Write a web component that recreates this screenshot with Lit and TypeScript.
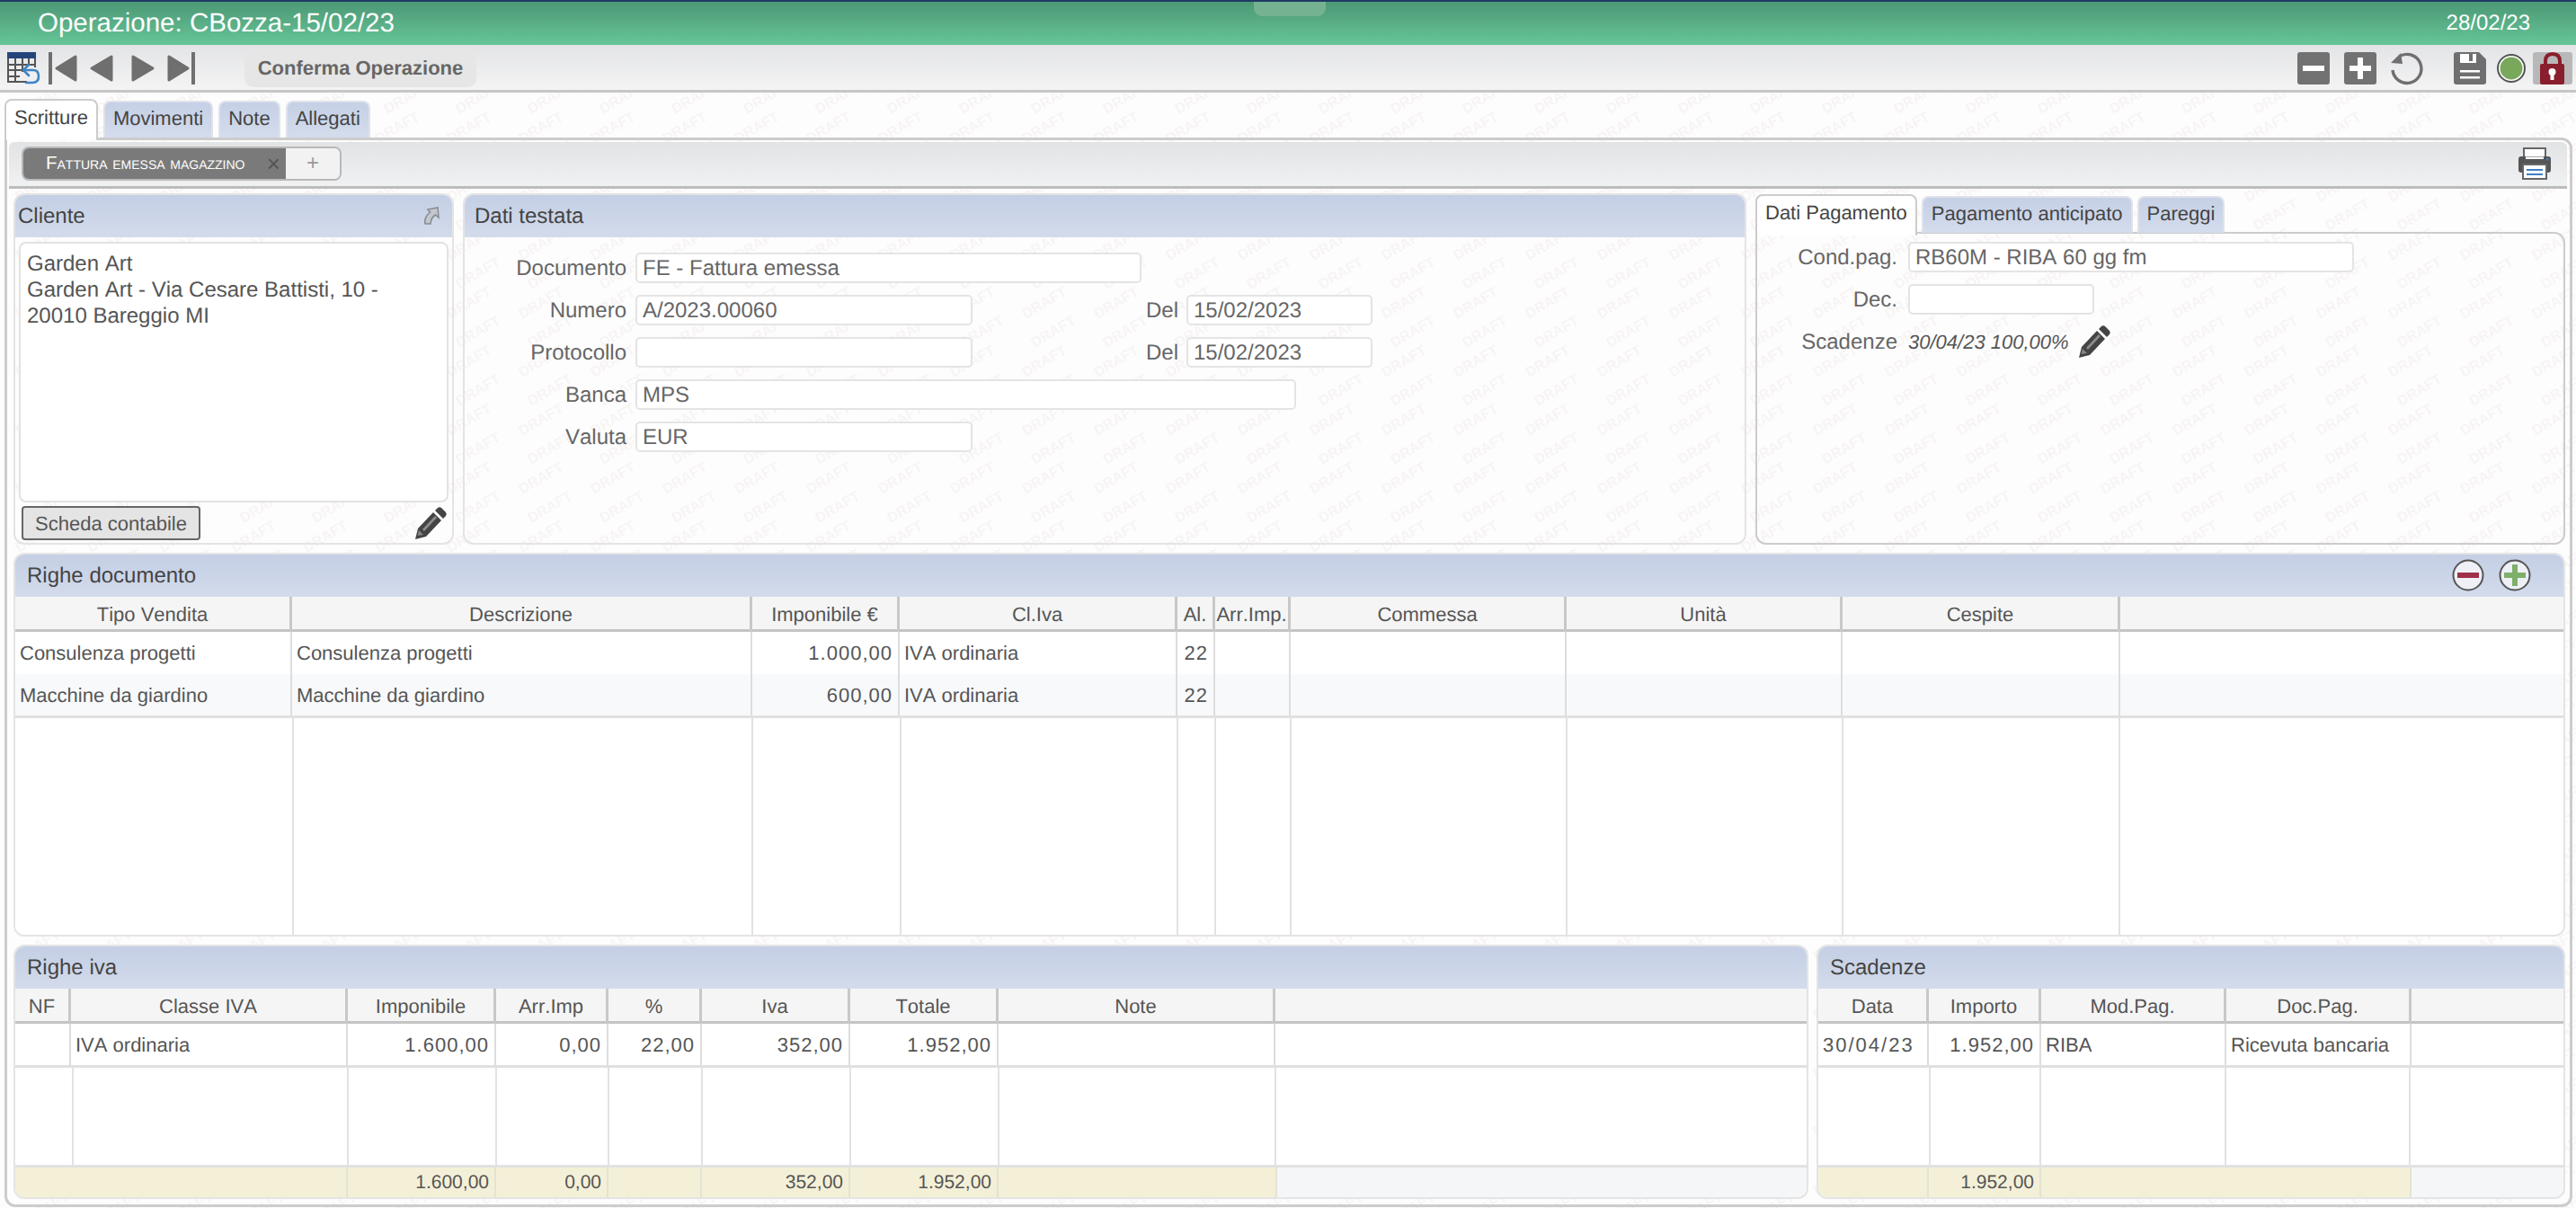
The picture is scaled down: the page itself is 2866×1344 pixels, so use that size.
import { LitElement, html, svg, css, unsafeCSS } from 'lit';
import { customElement } from 'lit/decorators.js';

// DRAFT watermark tile, the texts are repeated so they wrap over the tile edges
const marks: string[] = [];
for (const [cx, cy] of [[42, 12], [52, 44]]) {
  for (const dx of [-80, 0, 80]) {
    for (const dy of [-65, 0, 65]) {
      const x = cx + dx;
      const y = cy + dy;
      marks.push(`<text x='${x}' y='${y + 5}' transform='rotate(-30 ${x} ${y})' text-anchor='middle' font-family='Liberation Sans' font-weight='700' font-size='16' fill='%23f8f4f4'>DRAFT</text>`);
    }
  }
}
const blur = `<filter id='b' x='0' y='0' width='100%' height='100%'><feGaussianBlur stdDeviation='0.5'/></filter>`;
const watermark = `url("data:image/svg+xml,<svg xmlns='http://www.w3.org/2000/svg' width='80' height='65'>${blur}<g filter='url(%23b)'>${marks.join('')}</g></svg>")`;

interface Col { title: string; width: string; }
type Align = 'l' | 'r' | 'd' | '';
interface Cell { text?: string; align?: Align; }

const pencil = (cls: string) => html`<svg class=${cls} viewBox="0 0 36 36">
  <path fill="#444" d="M1 36 L4 24 L21 6 L30 15 L13 33 Z"/>
  <path fill="#8c8c8c" d="M9 25 L23 10 L25 12 L11 27 Z"/>
  <path fill="#fff" d="M3.5 32 L5 26 L10 31 Z" opacity=".35"/>
  <path fill="#444" d="M23 4 L26 1 Q28 -0.5 30 1 L35 6 Q36.5 8 35 10 L32 13 Z"/>
</svg>`;

const round = (kind: 'minus' | 'plus') => html`<svg class="round" viewBox="0 0 36 36">
  <circle cx="18" cy="18" r="16.5" fill="#eef0f6" stroke="#555" stroke-width="2"/>
  ${kind === 'minus'
    ? svg`<rect x="6" y="15" width="24" height="6" fill="#a0304a"/>`
    : svg`<path fill="#7fb069" d="M15 6 H21 V15 H30 V21 H21 V30 H15 V21 H6 V15 H15 Z"/>`}
</svg>`;

@customElement('app-root')
export class AppRoot extends LitElement {
  renderTable(cols: Col[], rows: Cell[][], fillCols: string, totals?: { cols: string; cells: Cell[]; }) {
    const tpl = cols.map((c) => c.width).join(' ');
    return html`
      <div class="thead" style="grid-template-columns:${tpl}">
        ${cols.map((c) => html`<div class="th">${c.title}</div>`)}
      </div>
      ${rows.map((r, i) => html`
        <div class="tr ${i % 2 ? 'odd' : ''} ${i === rows.length - 1 ? 'end' : ''}" style="grid-template-columns:${tpl}">
          ${r.map((c) => html`<div class="td ${c.align === 'r' ? 'right' : ''} ${c.align === 'd' ? 'dt' : ''}">${c.text ?? ''}</div>`)}
        </div>
      `)}
      <div class="filler" style="grid-template-columns:${fillCols}">
        ${fillCols.split(' ').map(() => html`<div class="fc"></div>`)}
      </div>
      ${totals ? html`
        <div class="totals" style="grid-template-columns:${totals.cols}">
          ${totals.cells.map((c) => html`<div class="tot ${c.text === undefined && c.align === '' ? 'plain' : ''}">${c.text ?? ''}</div>`)}
        </div>
      ` : ''}
    `;
  }

  render() {
    const docCols: Col[] = [
      { title: 'Tipo Vendita', width: '308px' }, { title: 'Descrizione', width: '512px' },
      { title: 'Imponibile €', width: '164px' }, { title: 'Cl.Iva', width: '309px' },
      { title: 'Al.', width: '42px' }, { title: 'Arr.Imp.', width: '84px' },
      { title: 'Commessa', width: '307px' }, { title: 'Unità', width: '307px' },
      { title: 'Cespite', width: '309px' }, { title: '', width: '1fr' },
    ];
    const docRow = (a: string, imp: string): Cell[] => [
      { text: a }, { text: a }, { text: imp, align: 'r' }, { text: 'IVA ordinaria' },
      { text: '22', align: 'r' }, {}, {}, {}, {}, {},
    ];
    const ivaCols: Col[] = [
      { title: 'NF', width: '62px' }, { title: 'Classe IVA', width: '308px' },
      { title: 'Imponibile', width: '165px' }, { title: 'Arr.Imp', width: '125px' },
      { title: '%', width: '104px' }, { title: 'Iva', width: '165px' },
      { title: 'Totale', width: '165px' }, { title: 'Note', width: '308px' }, { title: '', width: '1fr' },
    ];
    const scadCols: Col[] = [
      { title: 'Data', width: '123px' }, { title: 'Importo', width: '125px' },
      { title: 'Mod.Pag.', width: '206px' }, { title: 'Doc.Pag.', width: '206px' }, { title: '', width: '1fr' },
    ];

    return html`
      <header class="top">
        <span class="title">Operazione: CBozza-15/02/23</span>
        <span class="date">28/02/23</span>
        <div class="grabber"></div>
      </header>

      <div class="toolbar">
        <svg class="ic tbl" viewBox="0 0 36 36">
          <rect x="0" y="0" width="32" height="7" fill="#24457a"/>
          <path fill="none" stroke="#555" stroke-width="2" d="M1 7 V33 H22 M31 7 V17 M1 14 H31 M1 20 H18 M1 27 H14 M9 7 V33 M17 7 V22 M24 7 V15"/>
          <path fill="none" stroke="#3d85c6" stroke-width="2.6" stroke-linecap="round" d="M19 20 H29 Q35 20 35 27 Q35 34 28 34 H21"/>
          <path fill="none" stroke="#3d85c6" stroke-width="2.6" stroke-linecap="round" stroke-linejoin="round" d="M24 14 L18 20 L24 26"/>
        </svg>
        <svg class="ic nav-first" viewBox="0 0 32 36" width="32">
          <rect x="0" y="0" width="4" height="36" fill="#6f6f6f"/>
          <path fill="#6f6f6f" stroke="#6f6f6f" stroke-width="3" stroke-linejoin="round" d="M9 18 L30 5 V31 Z"/>
        </svg>
        <svg class="ic nav-prev" viewBox="0 0 26 36" width="26">
          <path fill="#6f6f6f" stroke="#6f6f6f" stroke-width="3" stroke-linejoin="round" d="M2 18 L24 5 V31 Z"/>
        </svg>
        <svg class="ic nav-next" viewBox="0 0 26 36" width="26">
          <path fill="#6f6f6f" stroke="#6f6f6f" stroke-width="3" stroke-linejoin="round" d="M24 18 L2 5 V31 Z"/>
        </svg>
        <svg class="ic nav-last" viewBox="0 0 32 36" width="32">
          <rect x="27" y="0" width="4" height="36" fill="#6f6f6f"/>
          <path fill="#6f6f6f" stroke="#6f6f6f" stroke-width="3" stroke-linejoin="round" d="M23 18 L2 5 V31 Z"/>
        </svg>
        <div class="confirm">Conferma Operazione</div>
        <div class="spacer"></div>
        <svg class="ic" viewBox="0 0 36 36">
          <rect width="36" height="36" rx="3" fill="#727272"/>
          <rect x="6" y="15" width="24" height="6" fill="#fff"/>
        </svg>
        <svg class="ic plus" viewBox="0 0 36 36">
          <rect width="36" height="36" rx="3" fill="#727272"/>
          <path fill="#fff" d="M15 6 H21 V15 H30 V21 H21 V30 H15 V21 H6 V15 H15 Z"/>
        </svg>
        <svg class="ic plus" viewBox="0 0 36 36">
          <path fill="none" stroke="#6f6f6f" stroke-width="3.4" d="M11 4 A16 16 0 1 1 2 20"/>
          <path fill="#6f6f6f" d="M0 12 L11 1 L13 13 Z"/>
        </svg>
        <svg class="ic save" viewBox="0 0 36 36">
          <path fill="#6f6f6f" d="M3 0 H28 L36 8 V33 Q36 36 33 36 H3 Q0 36 0 33 V3 Q0 0 3 0 Z"/>
          <path fill="#fff" d="M7 2 H25 V12 H7 Z"/>
          <rect x="17" y="2" width="4" height="8" fill="#6f6f6f"/>
          <rect x="7" y="20" width="22" height="2.5" fill="#fff"/>
          <rect x="7" y="27" width="22" height="2.5" fill="#fff"/>
        </svg>
        <svg class="ic status" viewBox="0 0 32 36" width="32">
          <circle cx="16" cy="18" r="15" fill="#fff" stroke="#555" stroke-width="2"/>
          <circle cx="16" cy="18" r="12.5" fill="#79a85c"/>
        </svg>
        <div class="lock">
          <svg viewBox="0 0 28 36" width="28" height="36">
            <path fill="none" stroke="#8a1e2d" stroke-width="4" d="M6 16 V10 Q6 2 14 2 Q22 2 22 10 V16"/>
            <rect x="0" y="13" width="27" height="23" rx="2" fill="#8a1e2d"/>
            <circle cx="13.5" cy="22" r="4" fill="#fff"/>
            <rect x="11.5" y="23" width="4" height="8" fill="#fff"/>
          </svg>
        </div>
      </div>

      <nav class="tabs main-tabs">
        <div class="tab active">Scritture</div>
        <div class="tab">Movimenti</div>
        <div class="tab">Note</div>
        <div class="tab">Allegati</div>
      </nav>

      <main class="box">
        <div class="subbar">
          <div class="pill">
            <span class="pill-on">Fattura emessa magazzino<span class="x">×</span></span>
            <span class="pill-add">+</span>
          </div>
          <svg class="print" viewBox="0 0 36 36" width="36" height="36">
            <rect x="6" y="1" width="24" height="12" fill="#fff" stroke="#666" stroke-width="2"/>
            <path fill="#555" d="M3 10 H33 Q36 10 36 13 V25 Q36 28 33 28 H3 Q0 28 0 25 V13 Q0 10 3 10 Z"/>
            <rect x="8" y="10.5" width="20" height="2.5" fill="#fff"/>
            <rect x="31" y="12" width="2.5" height="2.5" fill="#3d7fc4"/>
            <rect x="5" y="19" width="26" height="16" fill="#fff" stroke="#666" stroke-width="2"/>
            <rect x="9" y="24" width="18" height="2" fill="#3d7fc4"/>
            <rect x="9" y="29" width="18" height="2" fill="#3d7fc4"/>
          </svg>
        </div>

        <div class="content">
          <section class="row1">
            <div class="panel">
              <div class="phead cliente">Cliente
                <svg class="link" viewBox="0 0 18 20" width="18" height="20">
                  <path fill="#c3c7ce" stroke="#8a8d93" stroke-width="1.6" d="M5 3 L16 1 L17 12 L13.5 9 Q8.5 12 8 19 L2 19 Q0.5 12 7.5 6 Z"/>
                </svg>
              </div>
              <div class="address">Garden Art<br />Garden Art - Via Cesare Battisti, 10 -<br />20010 Bareggio MI</div>
              <div class="cliente-foot">
                <div class="btn">Scheda contabile</div>
                ${pencil('pen')}
              </div>
            </div>

            <div class="panel">
              <div class="phead testata">Dati testata</div>
              <div class="form testata-form">
                <div class="frow"><label>Documento</label><div class="inp w563">FE - Fattura emessa</div></div>
                <div class="frow"><label>Numero</label><div class="inp w375">A/2023.00060</div>
                  <label class="del">Del</label><div class="inp w207">15/02/2023</div></div>
                <div class="frow"><label>Protocollo</label><div class="inp w375"></div>
                  <label class="del">Del</label><div class="inp w207">15/02/2023</div></div>
                <div class="frow"><label>Banca</label><div class="inp w735">MPS</div></div>
                <div class="frow"><label>Valuta</label><div class="inp w375">EUR</div></div>
              </div>
            </div>

            <div class="pay">
              <nav class="tabs pay-tabs">
                <div class="tab active">Dati Pagamento</div>
                <div class="tab">Pagamento anticipato</div>
                <div class="tab">Pareggi</div>
              </nav>
              <div class="paybox">
                <div class="form pay-form">
                  <div class="frow"><label>Cond.pag.</label><div class="inp w496">RB60M - RIBA 60 gg fm</div></div>
                  <div class="frow"><label>Dec.</label><div class="inp w207"></div></div>
                  <div class="frow"><label>Scadenze</label><em class="due">30/04/23 100,00%</em>${pencil('pen small')}</div>
                </div>
              </div>
            </div>
          </section>

          <section class="panel docs">
            <div class="phead big">Righe documento
              <span class="actions">${round('minus')}${round('plus')}</span>
            </div>
            ${this.renderTable(docCols, [
              docRow('Consulenza progetti', '1.000,00'),
              docRow('Macchine da giardino', '600,00'),
            ], '310px 511px 165px 308px 42px 84px 307px 307px 308px 1fr')}
          </section>

          <section class="row3">
            <div class="panel">
              <div class="phead big">Righe iva</div>
              ${this.renderTable(ivaCols, [[
                {}, { text: 'IVA ordinaria' }, { text: '1.600,00', align: 'r' }, { text: '0,00', align: 'r' },
                { text: '22,00', align: 'r' }, { text: '352,00', align: 'r' }, { text: '1.952,00', align: 'r' }, {}, {},
              ]], '65px 306px 165px 125px 104px 165px 165px 308px 1fr', {
                cols: '370px 165px 125px 104px 165px 165px 310px 1fr',
                cells: [{}, { text: '1.600,00' }, { text: '0,00' }, {}, { text: '352,00' }, { text: '1.952,00' }, {}, { align: '' }],
              })}
            </div>
            <div class="panel">
              <div class="phead big">Scadenze</div>
              ${this.renderTable(scadCols, [[
                { text: '30/04/23', align: 'd' }, { text: '1.952,00', align: 'r' }, { text: 'RIBA' }, { text: 'Ricevuta bancaria' }, {},
              ]], '125px 123px 206px 205px 1fr', {
                cols: '123px 125px 412px 1fr',
                cells: [{}, { text: '1.952,00' }, {}, { align: '' }],
              })}
            </div>
          </section>
        </div>
      </main>
    `;
  }

  static styles = css`
    * { box-sizing: border-box; margin: 0; padding: 0; }
    :host {
      display: block;
      width: 2866px;
      height: 1344px;
      overflow: hidden;
      font-family: "Liberation Sans", Arial, sans-serif;
      text-rendering: geometricPrecision;
      font-kerning: none;
      color: #555;
      background-color: #fdfdfd;
      background-image: ${unsafeCSS(watermark)};
    }

    .top {
      position: relative;
      height: 50px;
      border-top: 2px solid #1f3a63;
      background: linear-gradient(#4c9875, #66c598);
      color: #fff;
      display: flex;
      justify-content: space-between;
      align-items: center;
      padding: 0 51px 0 42px;
    }
    .title { font-size: 29.5px; }
    .date { font-size: 24px; }
    .grabber {
      position: absolute;
      left: 1395px;
      top: 0;
      width: 80px;
      height: 16px;
      border-radius: 0 0 9px 9px;
      background: #75b292;
    }

    .toolbar {
      height: 53px;
      border-bottom: 3px solid #c6c6c6;
      background: linear-gradient(#e3e4e6, #f4f4f5);
      display: flex;
      align-items: center;
      padding: 2px 4px 0 8px;
    }
    .ic { width: 36px; height: 36px; flex: none; overflow: visible; }
    .ic[width="32"] { width: 32px; }
    .ic[width="26"] { width: 26px; }
    .nav-first { margin-left: 10px; }
    .nav-prev { margin-left: 14px; }
    .nav-next { margin-left: 20px; }
    .nav-last { margin-left: 14px; }
    .confirm {
      margin-left: 54px;
      width: 258px;
      height: 42px;
      border-radius: 10px;
      background: #e6e6e6;
      color: #666;
      font-size: 22px;
      font-weight: 700;
      line-height: 42px;
      text-align: center;
    }
    .spacer { flex: 1; }
    .plus { margin-left: 16px; }
    .save { margin-left: 34px; }
    .status { margin-left: 12px; }
    .lock {
      margin-left: 8px;
      width: 44px;
      height: 36px;
      border-radius: 3px;
      background: #b8b8b8;
      display: flex;
      justify-content: center;
    }

    .tabs { display: flex; align-items: flex-end; position: relative; z-index: 1; }
    .main-tabs { height: 43px; margin: 7px 0 0 5px; gap: 6px; }
    .tab {
      height: 41px;
      padding: 0 9px;
      font-size: 22px;
      line-height: 36px;
      color: #444;
      border-radius: 8px 8px 0 0;
      border: 2px solid #dfe2ea;
      border-bottom: none;
      background: linear-gradient(#c5d0e6, #d4dcec);
    }
    .tab.active {
      height: 46px;
      margin-bottom: -3px;
      background: #fff;
      border-color: #ccc;
      line-height: 38px;
    }

    .box {
      margin: 0 4px 0 5px;
      height: 1190px;
      border: 3px solid #ccc;
      border-radius: 0 12px 12px 12px;
      padding-top: 2px;
    }
    .subbar {
      height: 52px;
      margin: 0 3px 0 2px;
      border-bottom: 3px solid #bcbcbc;
      background: linear-gradient(#e2e3e5, #f0f1f3);
      border-radius: 6px 6px 0 0;
      display: flex;
      justify-content: space-between;
      align-items: center;
      padding: 0 18px 2px 14px;
    }
    .pill {
      display: flex;
      width: 356px;
      height: 38px;
      border: 2px solid #b8b8b8;
      border-radius: 8px;
      overflow: hidden;
    }
    .pill-on {
      width: 292px;
      background: #7a7a7a;
      color: #fff;
      font-size: 20.5px;
      font-variant: small-caps;
      line-height: 34px;
      padding-left: 25px;
      white-space: nowrap;
      position: relative;
    }
    .x { position: absolute; right: 6px; top: 0; color: #555; font-size: 26px; font-variant: normal; }
    .pill-add { flex: 1; text-align: center; color: #999; font-size: 24px; line-height: 34px; background: #f2f2f3; }
    .print { display: block; }

    .content { padding: 5px 5px 0 7px; display: flex; flex-direction: column; gap: 9px; }
    .row1 { display: grid; grid-template-columns: 490px 1428px 901px; column-gap: 10px; height: 391px; }
    .row3 { display: grid; grid-template-columns: 1997px 833px; gap: 9px; height: 283px; }
    .docs { height: 427px; }

    .panel {
      border: 2px solid #e4e4e4;
      border-radius: 12px;
      overflow: hidden;
      display: flex;
      flex-direction: column;
    }
    .phead {
      flex: none;
      height: 47px;
      font-size: 24px;
      line-height: 48px;
      color: #444;
      background: linear-gradient(#c4cfe5, #d3dbeb);
      padding-left: 11px;
      position: relative;
    }
    .cliente { padding-left: 3px; }
    .big { padding-left: 13px; }
    .link { position: absolute; right: 14px; top: 13px; }
    .actions { position: absolute; right: 36px; top: 5px; display: flex; gap: 16px; }
    .round { width: 36px; height: 36px; display: block; }

    .address {
      margin: 5px 4px 0;
      height: 290px;
      border: 2px solid #e2e2e2;
      border-radius: 8px;
      background: #fff;
      padding: 8px 7px;
      font-size: 24px;
      line-height: 29px;
    }
    .cliente-foot {
      flex: 1;
      display: flex;
      justify-content: space-between;
      align-items: center;
      padding: 0 6px 0 7px;
    }
    .btn {
      width: 199px;
      height: 38px;
      border: 2px solid #666;
      border-radius: 4px;
      background: #e4e4e4;
      font-size: 22px;
      line-height: 36px;
      text-align: center;
    }
    .pen { width: 36px; height: 36px; display: block; overflow: visible; }
    .pen.small { margin-left: 10px; }

    .form { display: flex; flex-direction: column; gap: 13px; }
    .testata-form { padding-top: 17px; }
    .frow { height: 34px; display: flex; align-items: center; font-size: 24px; }
    .frow label { width: 180px; margin-right: 10px; padding-top: 2px; text-align: right; color: #666; flex: none; }
    .frow label.del { width: 229px; margin-right: 9px; }
    .inp {
      height: 34px;
      flex: none;
      border: 2px solid #e4e4e4;
      border-radius: 5px;
      background: #fff;
      line-height: 32px;
      padding-left: 6px;
      color: #666;
    }
    .w207 { width: 207px; }
    .w375 { width: 375px; }
    .w496 { width: 496px; }
    .w563 { width: 563px; }
    .w735 { width: 735px; }

    .pay { display: flex; flex-direction: column; }
    .pay-tabs { height: 43px; gap: 5px; margin-top: 1px; }
    .paybox {
      flex: 1;
      border: 2px solid #ccc;
      border-radius: 0 12px 12px 12px;
      margin-top: -1px;
    }
    .pay-form { padding-top: 9px; }
    .pay-form label { width: 156px; margin-right: 12px; }
    .due { font-size: 22px; color: #555; padding-top: 2px; }

    .thead, .tr, .filler, .totals { display: grid; flex: none; }
    .thead { height: 39px; border-bottom: 3px solid #c4c4c4; background: #f5f5f5; }
    .th {
      border-right: 3px solid #c8c8c8;
      font-size: 22px;
      line-height: 39px;
      text-align: center;
      white-space: nowrap;
    }
    .th:last-child, .td:last-child { border-right: none; }
    .tr { height: 47px; background: #fff; }
    .tr.odd { background: #f8f9fb; height: 48px; }
    .tr.end { border-bottom: 3px solid #e0e0e0; height: 49px; }
    .td {
      border-right: 2px solid #ddd;
      font-size: 22px;
      line-height: 48px;
      padding: 0 5px;
      white-space: nowrap;
      overflow: hidden;
    }
    .td.right { text-align: right; padding-right: 6px; letter-spacing: 1px; }
    .td.dt { letter-spacing: 2px; }
    .filler { flex: 1; background: #fff; }
    .fc { border-right: 2px solid #e2e2e2; }
    .fc:last-child { border-right: none; }
    .totals { height: 36px; border-top: 3px solid #e2e2e2; }
    .tot {
      background: #f4f0d8;
      border-right: 2px solid #e4e2d2;
      font-size: 21px;
      line-height: 34px;
      text-align: right;
      padding-right: 6px;
    }
    .tot.plain { background: #f5f6f7; border-right: none; }
  `;
}
